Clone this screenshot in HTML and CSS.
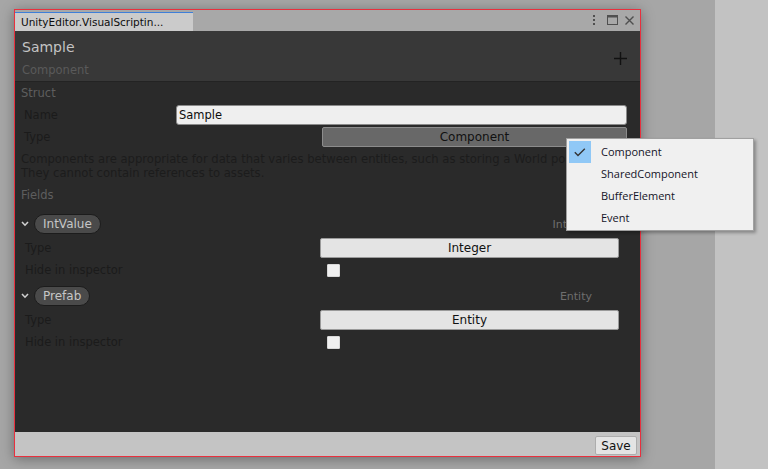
FILE: index.html
```html
<!DOCTYPE html>
<html>
<head>
<meta charset="utf-8">
<link rel="stylesheet" href="styles.css">
</head>
<body>
<div class="screen">
  <div class="desk">
    <div class="window">
      <div class="tabbar">
        <div class="tab">UnityEditor.VisualScriptin...</div>
        <div class="tab-icons">
          <svg class="ic-kebab" width="2" height="10" viewBox="0 0 2 10"><rect x="0" y="0" width="2" height="2"/><rect x="0" y="4" width="2" height="2"/><rect x="0" y="8" width="2" height="2"/></svg>
          <svg class="ic-max" width="11" height="10" viewBox="0 0 11 10"><rect x="0.5" y="0.5" width="10" height="9" fill="none" stroke="#4f4f4f"/><rect x="0" y="0" width="11" height="2.5" fill="#4f4f4f"/></svg>
          <svg class="ic-close" width="9" height="9" viewBox="0 0 9 9"><path d="M0.5 0.5 L8.5 8.5 M8.5 0.5 L0.5 8.5" stroke="#4f4f4f" stroke-width="1.4"/></svg>
        </div>
      </div>
      <div class="header">
        <div class="titles">
          <div class="title">Sample</div>
          <div class="subtitle">Component</div>
        </div>
        <svg class="ic-plus" width="13" height="13" viewBox="0 0 13 13"><path d="M6.5 0 V13 M0 6.5 H13" stroke="#111" stroke-width="1.4"/></svg>
      </div>
      <div class="content">
        <div class="section">Struct</div>
        <div class="row">
          <span class="label label-name">Name</span>
          <div class="textfield">Sample</div>
        </div>
        <div class="row">
          <span class="label label-type">Type</span>
          <div class="dropdown">Component</div>
        </div>
        <p class="desc">Components are appropriate for data that varies between entities, such as storing a World position.<br>They cannot contain references to assets.</p>
        <div class="section section-fields">Fields</div>

        <div class="field first">
          <div class="field-head">
            <svg class="chev" width="8" height="6" viewBox="0 0 8 6"><path d="M1 1 L4 4.2 L7 1" fill="none" stroke="#d0d0d0" stroke-width="1.6"/></svg>
            <span class="pill">IntValue</span>
            <span class="ftype">Integer</span>
          </div>
          <div class="frow"><span class="flabel">Type</span><div class="btn">Integer</div></div>
          <div class="frow"><span class="flabel">Hide in inspector</span><div class="check"></div></div>
        </div>

        <div class="field">
          <div class="field-head">
            <svg class="chev" width="8" height="6" viewBox="0 0 8 6"><path d="M1 1 L4 4.2 L7 1" fill="none" stroke="#d0d0d0" stroke-width="1.6"/></svg>
            <span class="pill">Prefab</span>
            <span class="ftype">Entity</span>
          </div>
          <div class="frow"><span class="flabel">Type</span><div class="btn">Entity</div></div>
          <div class="frow"><span class="flabel">Hide in inspector</span><div class="check"></div></div>
        </div>
      </div>
      <div class="footer">
        <button class="save">Save</button>
      </div>
    </div>
  </div>
  <div class="strip"></div>

  <div class="popup">
    <div class="item checked">
      <span class="mark"><svg width="12" height="9" viewBox="0 0 12 9"><path d="M0.8 4.2 L4 7.4 L10.8 0.8" fill="none" stroke="#333" stroke-width="1.4"/></svg></span>
      <span class="itext">Component</span>
    </div>
    <div class="item"><span class="mark"></span><span class="itext">SharedComponent</span></div>
    <div class="item"><span class="mark"></span><span class="itext">BufferElement</span></div>
    <div class="item"><span class="mark"></span><span class="itext">Event</span></div>
  </div>
</div>
</body>
</html>
```

FILE: styles.css
```css
html, body {
  margin: 0;
  padding: 0;
}
body {
  font-family: "DejaVu Sans", Verdana, sans-serif;
  font-size: 11.5px;
}
.screen {
  position: relative;
  width: 768px;
  height: 469px;
  display: flex;
  overflow: hidden;
}
.desk {
  width: 715px;
  height: 469px;
  background: #a6a6a6;
  padding: 9px 0 0 14px;
  box-sizing: border-box;
}
.strip {
  flex: 1;
  background: #c2c2c2;
}
.window {
  width: 627px;
  height: 448px;
  box-sizing: border-box;
  border: 1px solid #e8303e;
  box-shadow: 0 2px 12px rgba(0, 0, 0, 0.35);
  display: flex;
  flex-direction: column;
  overflow: hidden;
}

/* tab bar */
.tabbar {
  height: 21px;
  flex: none;
  background: #a8a8a8;
  display: flex;
  align-items: flex-end;
  box-sizing: border-box;
}
.tab {
  width: 178px;
  height: 19px;
  box-sizing: border-box;
  background: #cbcbcb;
  border-top: 1px solid #3f7fd8;
  padding-left: 6px;
  font-size: 10.5px;
  line-height: 18px;
  color: #0d0d0d;
  white-space: nowrap;
}
.tab-icons {
  margin-left: auto;
  align-self: stretch;
  display: flex;
  align-items: flex-start;
  padding-top: 5px;
  padding-right: 6px;
}
.ic-kebab { fill: #4f4f4f; margin-right: 12px; }
.ic-max { margin-right: 7px; }
.ic-close { margin-top: 1px; }

/* header */
.header {
  height: 50px;
  flex: none;
  background: #383838;
  border-bottom: 1px solid #232323;
  display: flex;
  padding-left: 7px;
  padding-right: 13px;
}
.titles {
  padding-top: 7px;
}
.title {
  font-size: 14px;
  line-height: 18px;
  color: #c4c4c4;
}
.subtitle {
  font-size: 11.5px;
  line-height: 14px;
  margin-top: 7px;
  color: #5a5a5a;
}
.ic-plus {
  margin-left: auto;
  margin-top: 21px;
}

/* content */
.content {
  flex: 1;
  background: #2a2a2a;
  padding-top: 3px;
  overflow: hidden;
}
.section {
  height: 19px;
  line-height: 16px;
  padding-left: 6px;
  color: #5e5e5e;
}
.row {
  height: 22px;
  display: flex;
  align-items: center;
  padding-left: 9px;
  padding-right: 13px;
}
.label {
  color: #1b1b1b;
  flex: none;
}
.label-name { width: 152px; }
.label-type { width: 298px; }
.textfield {
  flex: 1;
  height: 20px;
  box-sizing: border-box;
  background: #efefef;
  border: 1px solid #8a8a8a;
  border-radius: 3px;
  padding-left: 2px;
  line-height: 18px;
  color: #0d0d0d;
}
.dropdown {
  flex: 1;
  height: 20px;
  box-sizing: border-box;
  background: #686868;
  border: 1px solid #8c8c8c;
  border-radius: 2px;
  text-align: center;
  font-size: 12px;
  line-height: 18px;
  color: #111;
}
.desc {
  margin: 4px 0 0 0;
  padding-left: 6px;
  line-height: 14px;
  color: #1c1c1c;
  white-space: nowrap;
  font-size: 11.6px;
}
.section-fields {
  margin-top: 7px;
  height: 16px;
}

/* fields */
.field {
  margin-top: 5px;
}
.field.first {
  margin-top: 11px;
}
.field-head {
  height: 20px;
  display: flex;
  align-items: center;
  padding-left: 6px;
  padding-right: 48px;
}
.chev {
  margin-right: 5px;
}
.pill {
  height: 20px;
  box-sizing: border-box;
  background: #4a4a4a;
  border: 1px solid #1c1c1c;
  border-radius: 10px;
  padding: 0 8px;
  line-height: 18px;
  font-size: 12px;
  color: #c6c6c6;
}
.ftype {
  margin-left: auto;
  color: #6e6e6e;
  font-size: 11px;
}
.frow {
  height: 22px;
  display: flex;
  align-items: center;
  padding-left: 10px;
  padding-right: 21px;
}
.field-head + .frow {
  margin-top: 3px;
}
.flabel {
  width: 295px;
  flex: none;
  color: #1b1b1b;
}
.btn {
  flex: 1;
  height: 20px;
  box-sizing: border-box;
  background: #e4e4e4;
  border: 1px solid #9a9a9a;
  border-radius: 2px;
  text-align: center;
  font-size: 12px;
  line-height: 18px;
  color: #111;
}
.check {
  width: 13px;
  height: 13px;
  box-sizing: border-box;
  background: #f0f0f0;
  border: 1px solid #d8d8d8;
  border-radius: 1px;
  margin-left: 7px;
}

/* footer */
.footer {
  height: 24px;
  flex: none;
  background: #c4c4c4;
  display: flex;
  align-items: flex-start;
  justify-content: flex-end;
  padding-right: 3px;
  box-sizing: border-box;
  padding-top: 4px;
}
.save {
  height: 19px;
  width: 42px;
  padding: 0;
  box-sizing: border-box;
  background: #e4e4e4;
  border: 1px solid #adadad;
  border-radius: 2px;
  font-family: "DejaVu Sans", Verdana, sans-serif;
  font-size: 12px;
  color: #111;
  line-height: 19px;
}

/* popup menu */
.popup {
  position: absolute;
  left: 566px;
  top: 138px;
  width: 188px;
  box-sizing: border-box;
  background: #f0f0f0;
  border: 1px solid #a0a0a0;
  box-shadow: 2px 2px 3px rgba(0, 0, 0, 0.3);
  padding: 2px 0 1px 2px;
  font-family: "Open Sans", "Noto Sans", sans-serif;
  font-size: 11px;
}
.item {
  height: 22px;
  display: flex;
  align-items: center;
}
.mark {
  width: 22px;
  height: 22px;
  flex: none;
  display: flex;
  align-items: center;
  justify-content: center;
}
.item.checked .mark {
  background: #90c8f6;
}
.itext {
  margin-left: 10px;
  padding-bottom: 2px;
  color: #141428;
}
```
